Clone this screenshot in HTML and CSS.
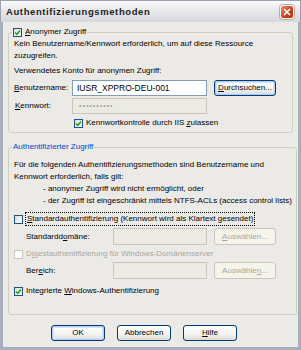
FILE: index.html
```html
<!DOCTYPE html>
<html lang="de">
  <head>
    <meta charset="utf-8" />
    <title>Authentifizierungsmethoden</title>
    <link rel="stylesheet" href="styles.css">
  </head>
  <body>
    <div class="window">
      <div class="titlebar">
        <span class="title">Authentifizierungsmethoden</span>
        <span class="close">
          <svg width="8" height="8" viewBox="0 0 8 8"><path d="M1 1L7 7M7 1L1 7" stroke="#fff" stroke-width="1.6"/></svg>
        </span>
      </div>

      <div class="frame">
        <fieldset class="group group-anon">
          <legend>
            <span class="check"><span class="box"><svg width="7" height="7" viewBox="0 0 7 7"><path d="M1 3.5L2.8 5.3L6 1.5" fill="none" stroke="#21a121" stroke-width="1.6"/></svg></span><span><u>A</u>nonymer Zugriff</span></span>
          </legend>
          <p class="text">Kein Benutzername/Kennwort erforderlich, um auf diese Ressource<br>zuzugreifen.</p>
          <p class="text account">Verwendetes Konto für anonymen Zugriff:</p>
          <div class="row row-user">
            <span class="label label-user"><u>B</u>enutzername:</span>
            <span class="field">IUSR_XPPRO-DEU-001</span>
            <span class="btn btn-focus"><span><u>D</u>urchsuchen...</span></span>
          </div>
          <div class="row row-pass">
            <span class="label label-user label-pass"><u>K</u>ennwort:</span>
            <span class="field field-disabled dots">••••••••••</span>
          </div>
          <div class="row row-iis">
            <span class="check"><span class="box"><svg width="7" height="7" viewBox="0 0 7 7"><path d="M1 3.5L2.8 5.3L6 1.5" fill="none" stroke="#21a121" stroke-width="1.6"/></svg></span><span>Kennwortkontrolle durch IIS <u>z</u>ulassen</span></span>
          </div>
        </fieldset>

        <fieldset class="group group-auth">
          <legend class="legend-blue">Authentifizierter Zugriff</legend>
          <p class="text intro">
            Für die folgenden Authentifizierungsmethoden sind Benutzername und<br>
            Kennwort erforderlich, falls gilt:<br>
            <span class="bullet">- anonymer Zugriff wird nicht ermöglicht, oder</span><br>
            <span class="bullet">- der Zugriff ist eingeschränkt mittels NTFS-ACLs (access control lists)</span>
          </p>
          <div class="row row-basic">
            <span class="check"><span class="box"></span><span class="focus"><u>S</u>tandardauthentifizierung (Kennwort wird als Klartext gesendet)</span></span>
          </div>
          <div class="row row-domain">
            <span class="label label-sub">Standardd<u>o</u>mäne:</span>
            <span class="field field-disabled field-short"></span>
            <span class="btn btn-disabled"><span><u>A</u>uswählen...</span></span>
          </div>
          <div class="row row-digest">
            <span class="check check-disabled"><span class="box"></span><span>D<u>i</u>gestauthentifizierung für Windows-Domänenserver</span></span>
          </div>
          <div class="row row-realm">
            <span class="label label-sub">Ber<u>e</u>ich:</span>
            <span class="field field-disabled field-short"></span>
            <span class="btn btn-disabled"><span>Auswähle<u>n</u>...</span></span>
          </div>
          <div class="row row-windows">
            <span class="check"><span class="box"><svg width="7" height="7" viewBox="0 0 7 7"><path d="M1 3.5L2.8 5.3L6 1.5" fill="none" stroke="#21a121" stroke-width="1.6"/></svg></span><span>Integrierte <u>W</u>indows-Authentifizierung</span></span>
          </div>
        </fieldset>

        <div class="buttons">
          <span class="btn btn-dialog btn-focus">OK</span>
          <span class="btn btn-dialog">Abbrechen</span>
          <span class="btn btn-dialog"><span><u>H</u>ilfe</span></span>
        </div>
      </div>
    </div>
  </body>
</html>
```

FILE: styles.css
```css
* {
  box-sizing: border-box;
  margin: 0;
  padding: 0;
}

body {
  font-family: 'Liberation Sans', Arial, sans-serif;
  font-size: 8px;
  line-height: 12px;
  color: #000;
  background-color: #fff;
}

u {
  text-decoration: underline;
  text-underline-offset: 1px;
}

.window {
  width: 301px;
  height: 350px;
  background-color: #ebeae7;
}

/* Titelleiste */
.titlebar {
  height: 22px;
  display: flex;
  align-items: center;
  justify-content: space-between;
  padding: 0 6px 0 5px;
  background: linear-gradient(#fbfbfc, #e9e9ec 45%, #d6d7dd);
  border: 1px solid #9aa2b2;
  border-bottom: none;
}

.title {
  font-weight: bold;
  font-size: 9.5px;
  letter-spacing: 0.6px;
  color: #222;
}

.close {
  width: 14px;
  height: 14px;
  display: flex;
  align-items: center;
  justify-content: center;
  border: 1px solid #fff;
  border-radius: 3px;
  background: linear-gradient(135deg, #e98a6b, #c8401c 60%, #b3300f);
  box-shadow: 0 0 0 1px #c9a99b;
}

.frame {
  height: 328px;
  border: 3px solid #a7aebc;
  border-top: none;
  padding: 4px 5px 0 5px;
}

/* Gruppenfelder */
.group {
  border: 1px solid #d0d0bf;
  border-radius: 3px;
  padding: 0 4px 3px 5px;
}

.group legend {
  margin-left: -2px;
  padding: 0 1px;
  line-height: 12px;
}

.group-auth {
  margin-top: 8px;
  padding-bottom: 17px;
}

.legend-blue {
  color: #0046d5;
}

.text {
  line-height: 12px;
}

.account {
  margin-top: 3px;
}

.intro {
  margin-top: 6px;
}

.bullet {
  padding-left: 29px;
  white-space: nowrap;
}

/* Zeilen */
.row {
  display: flex;
  align-items: center;
}

.row-user {
  margin-top: 3px;
  height: 16px;
}

.row-pass {
  margin-top: 2px;
  height: 16px;
}

.row-iis {
  margin-top: 3px;
  height: 12px;
  padding-left: 60px;
}

.row-basic {
  margin-top: 6px;
  height: 12px;
}

.row-domain {
  margin-top: 3px;
  height: 17px;
}

.row-digest {
  margin-top: 3px;
  height: 12px;
}

.row-realm {
  margin-top: 2px;
  height: 17px;
}

.row-windows {
  margin-top: 6px;
  height: 12px;
}

.label-user {
  width: 58px;
}

.label-pass {
  padding-left: 1px;
}

.label-sub {
  width: 99px;
  padding-left: 12px;
}

.field {
  width: 135px;
  height: 100%;
  display: flex;
  align-items: center;
  padding-left: 4px;
  background-color: #fff;
  border: 1px solid #7f9db9;
  font-size: 8.5px;
}

.field-short {
  width: 94px;
}

.field-disabled {
  background-color: #ebebe4;
  border-color: #c9c7ba;
}

.dots {
  color: #a6a6a0;
  font-size: 7px;
  letter-spacing: 1px;
  padding-left: 6px;
}

/* Kontrollkästchen */
.check {
  display: flex;
  align-items: center;
  gap: 3px;
  white-space: nowrap;
}

.box {
  width: 9px;
  height: 9px;
  display: flex;
  align-items: center;
  justify-content: center;
  border: 1px solid #1c5180;
  background: linear-gradient(135deg, #dcdcd7, #fff);
}

.check-disabled {
  color: #aca899;
}

.check-disabled .box {
  border-color: #cac8bb;
  background: #fff;
}

.focus {
  outline: 1px dotted #000;
  outline-offset: 0;
  padding: 0 1px;
}

/* Schaltflächen */
.btn {
  display: flex;
  align-items: center;
  justify-content: center;
  width: 62px;
  height: 16px;
  margin-left: 7px;
  border: 1px solid #003c74;
  border-radius: 3px;
  background: linear-gradient(#fff, #f3f3ef 60%, #dcdad2);
  white-space: nowrap;
}

.row-domain .btn,
.row-realm .btn {
  height: 17px;
}

.btn-focus {
  box-shadow: inset 0 0 0 1px #b5cdf2, inset 0 0 0 2px #d6e3f7;
}

.btn-disabled {
  color: #aca899;
  border-color: #c9c7ba;
  background: #f5f4ea;
}

.buttons {
  display: flex;
  gap: 12px;
  margin-top: 10px;
  padding-left: 43px;
}

.btn-dialog {
  width: 54px;
  height: 16px;
  margin-left: 0;
}
```
